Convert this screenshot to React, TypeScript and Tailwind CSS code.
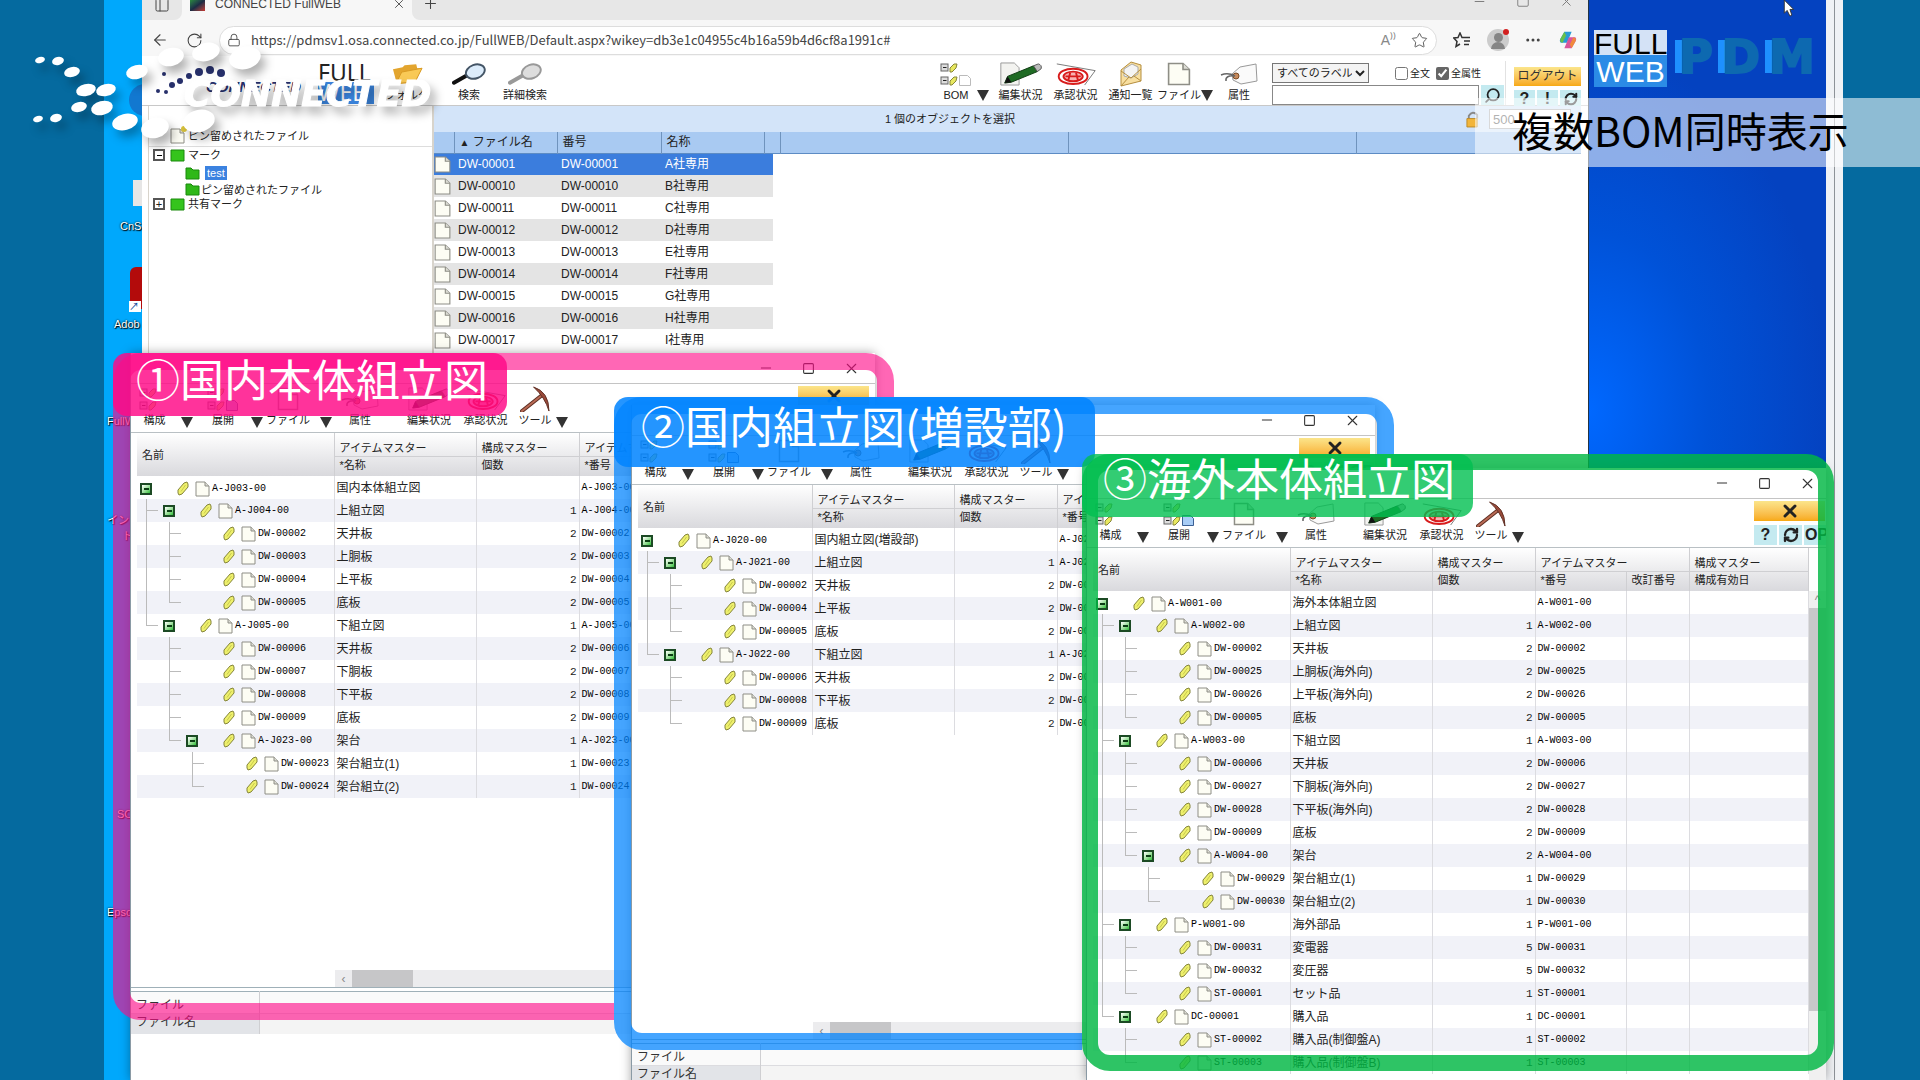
import type { ReactNode } from 'react';
import {
  ArrowLeft,
  Lock,
  Minus,
  MoreHorizontal,
  PanelLeft,
  Plus,
  RefreshCw,
  RotateCw,
  Search,
  Square,
  Star,
  X,
} from 'lucide-react';

type BomRow = { level: number; code: string; name: string; qty?: number };

const files = [
  ['DW-00001', 'A社専用'],
  ['DW-00010', 'B社専用'],
  ['DW-00011', 'C社専用'],
  ['DW-00012', 'D社専用'],
  ['DW-00013', 'E社専用'],
  ['DW-00014', 'F社専用'],
  ['DW-00015', 'G社専用'],
  ['DW-00016', 'H社専用'],
  ['DW-00017', 'I社専用'],
];

const domesticRows: BomRow[] = [
  { level: 0, code: 'A-J003-00', name: '国内本体組立図' },
  { level: 1, code: 'A-J004-00', name: '上組立図', qty: 1 },
  { level: 2, code: 'DW-00002', name: '天井板', qty: 2 },
  { level: 2, code: 'DW-00003', name: '上胴板', qty: 2 },
  { level: 2, code: 'DW-00004', name: '上平板', qty: 2 },
  { level: 2, code: 'DW-00005', name: '底板', qty: 2 },
  { level: 1, code: 'A-J005-00', name: '下組立図', qty: 1 },
  { level: 2, code: 'DW-00006', name: '天井板', qty: 2 },
  { level: 2, code: 'DW-00007', name: '下胴板', qty: 2 },
  { level: 2, code: 'DW-00008', name: '下平板', qty: 2 },
  { level: 2, code: 'DW-00009', name: '底板', qty: 2 },
  { level: 2, code: 'A-J023-00', name: '架台', qty: 1 },
  { level: 3, code: 'DW-00023', name: '架台組立(1)', qty: 1 },
  { level: 3, code: 'DW-00024', name: '架台組立(2)', qty: 1 },
];

const extensionRows: BomRow[] = [
  { level: 0, code: 'A-J020-00', name: '国内組立図(増設部)' },
  { level: 1, code: 'A-J021-00', name: '上組立図', qty: 1 },
  { level: 2, code: 'DW-00002', name: '天井板', qty: 2 },
  { level: 2, code: 'DW-00004', name: '上平板', qty: 2 },
  { level: 2, code: 'DW-00005', name: '底板', qty: 2 },
  { level: 1, code: 'A-J022-00', name: '下組立図', qty: 1 },
  { level: 2, code: 'DW-00006', name: '天井板', qty: 2 },
  { level: 2, code: 'DW-00008', name: '下平板', qty: 2 },
  { level: 2, code: 'DW-00009', name: '底板', qty: 2 },
];

const overseasRows: BomRow[] = [
  { level: 0, code: 'A-W001-00', name: '海外本体組立図' },
  { level: 1, code: 'A-W002-00', name: '上組立図', qty: 1 },
  { level: 2, code: 'DW-00002', name: '天井板', qty: 2 },
  { level: 2, code: 'DW-00025', name: '上胴板(海外向)', qty: 2 },
  { level: 2, code: 'DW-00026', name: '上平板(海外向)', qty: 2 },
  { level: 2, code: 'DW-00005', name: '底板', qty: 2 },
  { level: 1, code: 'A-W003-00', name: '下組立図', qty: 1 },
  { level: 2, code: 'DW-00006', name: '天井板', qty: 2 },
  { level: 2, code: 'DW-00027', name: '下胴板(海外向)', qty: 2 },
  { level: 2, code: 'DW-00028', name: '下平板(海外向)', qty: 2 },
  { level: 2, code: 'DW-00009', name: '底板', qty: 2 },
  { level: 2, code: 'A-W004-00', name: '架台', qty: 2 },
  { level: 3, code: 'DW-00029', name: '架台組立(1)', qty: 1 },
  { level: 3, code: 'DW-00030', name: '架台組立(2)', qty: 1 },
  { level: 1, code: 'P-W001-00', name: '海外部品', qty: 1 },
  { level: 2, code: 'DW-00031', name: '変電器', qty: 5 },
  { level: 2, code: 'DW-00032', name: '変圧器', qty: 5 },
  { level: 2, code: 'ST-00001', name: 'セット品', qty: 1 },
  { level: 1, code: 'DC-00001', name: '購入品', qty: 1 },
  { level: 2, code: 'ST-00002', name: '購入品(制御盤A)', qty: 1 },
  { level: 2, code: 'ST-00003', name: '購入品(制御盤B)', qty: 1 },
];

/* ---------- icons ---------- */

function DocIcon({ className = 'w-[15px] h-[16px]' }: { className?: string }) {
  return (
    <svg viewBox="0 0 15 16" className={`${className} shrink-0`} preserveAspectRatio="none">
      <path d="M1 1h9l4 4v10H1z" fill="#fdfdf4" stroke="#8e8e86" />
      <path d="M10 1v4h4" fill="#dcdcd4" stroke="#8e8e86" />
    </svg>
  );
}

function ClipIcon() {
  return (
    <svg viewBox="0 0 12 15" className="w-[12px] h-[15px] shrink-0">
      <path d="M1 9 7 2l3-1 1 2v3l-6 7-3 1-1-2z" fill="#eef06c" stroke="#85853a" />
      <path d="M4 10.500 8.500 4" stroke="#c9ca4e" fill="none" />
    </svg>
  );
}

function BomIcon({ withPage = false, blue = false }: { withPage?: boolean; blue?: boolean }) {
  return (
    <svg viewBox="0 0 32 24" className="w-[32px] h-[24px]">
      {[2, 15].map((y) => (
        <g key={y}>
          <rect x="1" y={y} width="7" height="7" fill="#ddd" stroke="#666" />
          <path d={`M3 ${y + 3.5}h3.500`} stroke="#222" />
          <path d={`M10 ${y + 4}l4-4h3l-1 4-4 4h-2z`} fill="#e8e860" stroke="#85853a" />
        </g>
      ))}
      {withPage && (
        <path
          d="M19.500 13.500h8l3 3v7h-11z"
          fill={blue ? '#a8cdf6' : '#fff'}
          stroke={blue ? '#3b5f94' : '#bbb'}
        />
      )}
    </svg>
  );
}

function PencilIcon() {
  return (
    <svg viewBox="0 0 46 25" className="w-[46px] h-[24px]">
      <path d="M2 1h14l5 5v18H2z" fill="#f3f3f0" stroke="#999" />
      <path d="M6 22 9 15 36 4l4 6-27 11z" fill="#1f6b24" stroke="#0d3a10" />
      <path d="m36 4 5-2q4 1 3 5l-4 3z" fill="#bbb" stroke="#555" />
      <path d="m6 22 3-7 4 6z" fill="#111" />
    </svg>
  );
}

function StampIcon() {
  return (
    <svg viewBox="0 0 42 25" className="w-[42px] h-[24px]">
      <path d="M1 2 41 9 30 24" fill="none" stroke="#777" />
      <ellipse cx="18" cy="15" rx="15" ry="8" fill="#fff" stroke="#d81c1c" strokeWidth="2" />
      <ellipse cx="18" cy="15" rx="10" ry="5" fill="#f9b3b3" stroke="#d81c1c" strokeWidth="2" />
      <path d="M10 15h16M15 11l-2 8M21 11l2 8" stroke="#d81c1c" strokeWidth="2" />
    </svg>
  );
}

function EnvelopeIcon() {
  return (
    <svg viewBox="0 0 24 26" className="w-[24px] h-[26px]">
      <path d="M2 9 12 1l10 3v16l-20 5z" fill="#f8dfa0" stroke="#b58e3e" />
      <path d="M5 8 13 3l6 3v7l-7 4-7-2z" fill="#f4f4f4" stroke="#aaa" />
      <path d="m2 10 10 7 10-9M2 25l8-9M22 20l-7-5" fill="none" stroke="#b58e3e" />
    </svg>
  );
}

function TagIcon() {
  return (
    <svg viewBox="0 0 38 24" className="w-[38px] h-[24px]">
      <path d="m12 12 8-7 16-3 1 17-16 3-8-4z" fill="#fafafa" stroke="#999" />
      <circle cx="16" cy="14" r="3" fill="#c78a5c" stroke="#7a4a24" />
      <path d="M15 14Q8 10 1 13m5 6q-1-6 9-5" fill="none" stroke="#666" strokeWidth="1.500" />
    </svg>
  );
}

function PickIcon() {
  return (
    <svg viewBox="0 0 32 27" className="w-[31px] h-[26px]">
      <path d="M2 26 22 10" stroke="#5e2e22" strokeWidth="4" strokeLinecap="round" />
      <path d="M2 26 22 10" stroke="#b96a55" strokeWidth="2" strokeLinecap="round" />
      <path d="M14 1q16 5 16 25Q26 12 14 1z" fill="#9a4a3a" stroke="#5e2e22" />
    </svg>
  );
}

function FolderIcon() {
  return (
    <svg viewBox="0 0 32 22" className="w-[31px] h-[22px]">
      <path d="m1 6 10-2 2-2 12-1 1 4 5 0-8 15-18 1z" fill="#e3a52e" />
      <path d="m4 21 6-12 21-4-7 14z" fill="#f9c956" stroke="#d89a24" />
    </svg>
  );
}

function LensIcon({ gray = false }: { gray?: boolean }) {
  return (
    <svg viewBox="0 0 36 22" className="w-[35px] h-[22px]">
      <path d="m2 20 14-8" stroke={gray ? '#999' : '#111'} strokeWidth="4" strokeLinecap="round" />
      <ellipse
        cx="24"
        cy="8.500"
        rx="10"
        ry="7"
        transform="rotate(-20 24 8.500)"
        fill={gray ? '#ddd' : '#dcecfb'}
        stroke={gray ? '#999' : '#456'}
        strokeWidth="2"
      />
    </svg>
  );
}

function GreenBox({ folder = false }: { folder?: boolean }) {
  return (
    <svg viewBox="0 0 15 13" className="w-[15px] h-[13px] shrink-0">
      {folder ? (
        <path d="M1 1h5l2 2h6v9H1z" fill="#2fb818" stroke="#1b8a0c" />
      ) : (
        <path d="M1 1h13v11H1z" fill="#35c41c" stroke="#1b8a0c" />
      )}
    </svg>
  );
}

/* ---------- shared bits ---------- */

function ToolButton({ label, icon, className }: { label: string; icon: ReactNode; className: string }) {
  return (
    <button className={`flex flex-col items-center shrink-0 whitespace-nowrap ${className}`}>
      <span className="flex h-[26px] items-center justify-center">{icon}</span>
      <span className="text-[11px] leading-4">{label}</span>
    </button>
  );
}

function Caret({ className }: { className: string }) {
  return (
    <button aria-label="メニューを開く" className={`flex shrink-0 justify-center self-end pb-[4px] ${className}`}>
      <svg viewBox="0 0 12 11" className="w-[12px] h-[11px]">
        <path d="M0 0h12L6 11z" fill="#333" />
      </svg>
    </button>
  );
}

// true when the vertical guide of this level goes on below the row
function guideContinues(rows: BomRow[], index: number, level: number) {
  for (let i = index + 1; i < rows.length; i++) {
    if (rows[i].level === level) return true;
    if (rows[i].level < level) return false;
  }
  return false;
}

function TreeCell({ rows, index }: { rows: BomRow[]; index: number }) {
  const row = rows[index];
  const hasChildren = rows[index + 1]?.level > row.level;
  return (
    <div className={`flex h-[22px] items-center pl-[3px] ${row.level === 0 ? 'pt-[2px]' : ''}`}>
      {Array.from({ length: row.level }, (_, k) => {
        const goesOn = guideContinues(rows, index, k + 1);
        const isOwn = k === row.level - 1;
        return (
          <span key={k} className="flex h-[23px] w-[23px] shrink-0 flex-col pl-[6px]">
            <span
              className={`h-[12px] w-[12px] ${goesOn || isOwn ? 'border-l border-[#bbb]' : ''} ${
                isOwn ? 'border-b' : ''
              }`}
            />
            <span className={`h-[11px] ${goesOn ? 'border-l border-[#bbb]' : ''}`} />
          </span>
        );
      })}
      {hasChildren ? (
        <button
          aria-label="折りたたむ"
          className="mr-[25px] flex size-[12px] shrink-0 items-center justify-center border-2 border-[#1c4a24] bg-linear-to-br from-white to-[#1fc034]"
        >
          <span className="h-[2px] w-[5px] bg-[#0c3d14]" />
        </button>
      ) : (
        <span className="mr-[25px] w-[12px] shrink-0" />
      )}
      <ClipIcon />
      <span className="ml-[6px] flex">
        <DocIcon />
      </span>
      <span className="ml-[2px] [font-family:'Liberation_Mono',monospace] text-[10px] text-black">{row.code}</span>
    </div>
  );
}

function BomTable({ rows, narrow }: { rows: BomRow[]; narrow?: boolean }) {
  const th = 'border-r border-[#cfcfd2] p-0 pl-[5px] text-left font-normal';
  const td = 'border-r border-[#dcdce0] p-0 pl-[2px]';
  return (
    <table className="w-full table-fixed border-collapse whitespace-nowrap text-[12px] leading-4">
      <colgroup>
        <col className={narrow ? 'w-[174px]' : 'w-[197px]'} />
        <col className="w-[142px]" />
        <col className="w-[103px]" />
        <col className="w-[91px]" />
        <col className="w-[63px]" />
        <col />
      </colgroup>
      <thead className="bg-linear-to-b from-white to-[#d9d9dd] text-[11px] text-[#222]">
        <tr className="h-[23px] align-bottom">
          <th rowSpan={2} className={`${th} align-middle`}>
            名前
          </th>
          <th className={`${th} border-b`}>アイテムマスター</th>
          <th className={`${th} border-b`}>構成マスター</th>
          <th colSpan={2} className={`${th} border-b`}>
            アイテムマスター
          </th>
          <th className={`${th} border-b`}>構成マスター</th>
        </tr>
        <tr className="h-[20px] align-top">
          <th className={th}>*名称</th>
          <th className={th}>個数</th>
          <th className={th}>*番号</th>
          <th className={th}>改訂番号</th>
          <th className={th}>構成有効日</th>
        </tr>
      </thead>
      <tbody>
        {rows.map((row, i) => (
          <tr key={i} className="h-[23px] even:bg-[#f1f2f8]">
            <td className="overflow-hidden border-r border-[#dcdce0] p-0">
              <TreeCell rows={rows} index={i} />
            </td>
            <td className={td}>{row.name}</td>
            <td className="border-r border-[#dcdce0] p-0 pr-[2px] text-right [font-family:'Liberation_Mono',monospace] text-[11px]">
              {row.qty}
            </td>
            <td className={`${td} [font-family:'Liberation_Mono',monospace] text-[10px] text-black`}>{row.code}</td>
            <td className={td} />
            <td className={td} />
          </tr>
        ))}
      </tbody>
    </table>
  );
}

function BomWindow({ rows, narrow, className }: { rows: BomRow[]; narrow?: boolean; className: string }) {
  const isLong = rows.length > 20;
  return (
    <section
      className={`absolute overflow-hidden border-l border-[#8a9aa5] bg-white shadow-[0_0_10px_rgba(0,0,0,0.35)] ${className}`}
    >
      <div className="flex h-full min-w-[744px] flex-col">
        <div className="flex h-[31px] shrink-0 items-center justify-end gap-[28px] border-b border-[#c4c4c4] pr-[15px] text-[#333]">
          <button aria-label="最小化">
            <Minus size={16} strokeWidth={1.5} />
          </button>
          <button aria-label="最大化">
            <Square size={13} strokeWidth={2} />
          </button>
          <button aria-label="ウィンドウを閉じる">
            <X size={17} strokeWidth={1.5} />
          </button>
        </div>
        <div className="flex h-[49px] shrink-0 border-b border-[#b9c0c4] pt-[2px]">
          <ToolButton label="構成" icon={<BomIcon />} className="w-[47px]" />
          <Caret className="w-[18px]" />
          <ToolButton label="展開" icon={<BomIcon withPage blue />} className="w-[54px]" />
          <Caret className="w-[14px]" />
          <ToolButton label="ファイル" icon={<DocIcon className="w-[22px] h-[24px]" />} className="w-[48px]" />
          <Caret className="w-[28px]" />
          <ToolButton label="属性" icon={<TagIcon />} className="w-[40px]" />
          <ToolButton label="編集状況" icon={<PencilIcon />} className="ml-[21px] w-[56px]" />
          <ToolButton label="承認状況" icon={<StampIcon />} className="w-[57px]" />
          <ToolButton label="ツール" icon={<PickIcon />} className="w-[42px]" />
          <Caret className="w-[12px]" />
          <div className="ml-auto flex w-[77px] flex-col gap-[4px]">
            <button
              aria-label="閉じる"
              className="flex h-[20px] w-[71px] items-center justify-center bg-linear-to-b from-[#fbe58a] to-[#f7a90f]"
            >
              <X size={20} strokeWidth={3.5} />
            </button>
            <div className="flex gap-[2px] text-[16px] leading-5 font-bold">
              <button className="w-[23px] bg-[#c4eaf0]">?</button>
              <button aria-label="更新" className="flex w-[23px] items-center justify-center bg-[#c4eaf0]">
                <RefreshCw size={16} strokeWidth={3.5} />
              </button>
              <button className="w-[25px] bg-[#c4eaf0]">OP</button>
            </div>
          </div>
        </div>
        <div className="flex min-h-0 flex-1">
          <div className={`flex shrink-0 flex-col overflow-hidden pl-[6px] ${isLong ? 'w-[722px]' : 'w-[743px]'}`}>
            <BomTable rows={rows} narrow={narrow} />
            {!isLong && (
              <div className={`mt-auto flex h-[17px] bg-[#ececee] ${narrow ? 'ml-[175px]' : 'ml-[198px]'}`}>
                <button aria-label="左へスクロール" className="w-[17px] text-[12px] leading-4 text-[#888]">
                  ‹
                </button>
                <span className="w-[61px] bg-[#c6c6c8]" />
              </div>
            )}
          </div>
          {isLong && (
            <div className="mt-[43px] flex w-[17px] flex-col bg-[#f0f0f0]">
              <button aria-label="上へスクロール" className="h-[17px] text-[12px] leading-4 text-[#888]">
                ^
              </button>
              <span className="h-[403px] bg-[#c8c8ca]" />
            </div>
          )}
        </div>
        {!isLong && (
          <div className="h-[93px] shrink-0 border-t border-[#9fb0b8] pt-[3px]">
            <table className="w-full border-collapse border-t border-[#9fb0b8] text-[12px] leading-4 text-[#333]">
              <tbody>
                <tr className="h-[22px] bg-[#fafafa]">
                  <th className="w-[128px] border-r border-[#cfcfd2] p-0 pl-[5px] text-left align-bottom font-normal">
                    ファイル
                  </th>
                  <td />
                </tr>
                <tr className="h-[20px] border-t border-[#dcdce0] bg-[#f4f4f4]">
                  <th className="border-r border-[#cfcfd2] bg-[#e2e4e8] p-0 pl-[5px] text-left align-top font-normal">
                    ファイル名
                  </th>
                  <td />
                </tr>
              </tbody>
            </table>
          </div>
        )}
      </div>
    </section>
  );
}

/* ---------- main browser window ---------- */

function BrowserChrome() {
  return (
    <header>
      <div className="flex h-[20px] items-start bg-[#f7f7f7] text-[#444]">
        <button aria-label="タブ操作" className="flex h-[20px] w-[40px] justify-center rounded-br-[8px] bg-[#e7e7e7]">
          <PanelLeft size={16} strokeWidth={1.5} className="-mt-[3px]" />
        </button>
        <div className="flex h-[20px] w-[230px] items-start bg-[#f7f7f7] pl-[8px]">
          <span className="h-[11px] w-[15px] bg-linear-to-br from-[#2a8a3a] via-[#1c2b44] to-[#c8322c]" />
          <span className="-mt-[4px] ml-[10px] text-[12px] leading-4">CONNECTED FullWEB</span>
          <button aria-label="タブを閉じる" className="-mt-[3px] mr-[6px] ml-auto">
            <X size={14} strokeWidth={1.5} />
          </button>
        </div>
        <div className="flex h-[20px] flex-1 items-start rounded-bl-[8px] bg-[#e7e7e7]">
          <button aria-label="新しいタブ" className="-mt-[5px] ml-[10px]">
            <Plus size={17} strokeWidth={1.5} />
          </button>
          <div className="-mt-[6px] ml-auto flex gap-[29px] pr-[14px] text-[#777]">
            <Minus size={15} strokeWidth={1.5} />
            <Square size={14} strokeWidth={1.5} />
            <X size={15} strokeWidth={1.5} />
          </div>
        </div>
      </div>
      <div className="flex h-[36px] items-center bg-[#f7f7f7] pt-[4px] text-[#444]">
        <button aria-label="戻る" className="ml-[9px]">
          <ArrowLeft size={18} strokeWidth={1.5} />
        </button>
        <button aria-label="再読み込み" className="ml-[17px]">
          <RotateCw size={17} strokeWidth={1.5} />
        </button>
        <label className="ml-[16px] flex h-[29px] flex-1 items-center rounded-full border border-[#ddd] bg-white pl-[7px]">
          <Lock size={14} strokeWidth={1.5} />
          <input
            aria-label="アドレス"
            className="ml-[10px] flex-1 [font-family:'Noto_Sans_CJK_JP',sans-serif] text-[13px] leading-5 text-[#444] outline-none"
            defaultValue="https://pdmsv1.osa.connected.co.jp/FullWEB/Default.aspx?wikey=db3e1c04955c4b16a59b4d6cf8a1991c#"
          />
          <span className="mr-[15px] text-[14px] text-[#888]">A⁾⁾</span>
          <Star size={17} strokeWidth={1.2} className="mr-[8px]" />
        </label>
        <svg viewBox="0 0 18 16" className="ml-[16px] h-[16px] w-[18px]" fill="none" stroke="#333" strokeWidth="1.500">
          <path d="M11 5.500H9L7 1 5 5.500.800 6 4 9.500 3 14.500l4-2.500M11 5.500h6M11 9h6M11 12.500h5" />
        </svg>
        <span className="relative ml-[16px] flex size-[22px] flex-col items-center justify-end overflow-visible rounded-full bg-[#ccc]">
          <span className="size-[9px] rounded-full bg-[#858585]" />
          <span className="mb-[2px] h-[7px] w-[14px] rounded-t-full bg-[#858585]" />
          <span className="absolute top-0 right-0 size-[6px] rounded-full bg-[#d21f1f]" />
        </span>
        <MoreHorizontal size={18} className="ml-[15px]" />
        <svg viewBox="0 0 22 22" className="mr-[10px] ml-[16px] h-[20px] w-[20px]">
          <path d="M7 2h8l-5 12H3q-2-2 0-5z" fill="#2a9ad6" />
          <path d="M7 2 3 9q-2 4 2 5l4-8z" fill="#67c04a" />
          <path d="M15 20H7l5-12h7q2 2 0 5z" fill="#d9559b" />
          <path d="m15 20 4-7q2-4-2-5l-4 8z" fill="#f08a3c" />
        </svg>
      </div>
    </header>
  );
}

function AppToolbar() {
  return (
    <div className="flex h-[50px] border-b border-[#c8c8c8] pt-[5px] pl-[6px]">
      <div className="flex w-[170px] shrink-0 items-start">
        <svg viewBox="0 0 164 40" className="h-[40px] w-[164px]" role="img" aria-label="CONNECTED">
          <g fill="#27306b">
            <circle cx="62" cy="9" r="4" />
            <circle cx="51" cy="11" r="4" />
            <circle cx="41" cy="15" r="3" />
            <circle cx="73" cy="12" r="4" />
            <circle cx="32" cy="20" r="3" />
            <circle cx="24" cy="24" r="3" />
            <circle cx="18" cy="31" r="2" />
            <circle cx="10" cy="30" r="2" />
            <circle cx="16" cy="13" r="2" />
          </g>
          <text x="58" y="31" fontSize="15" fontWeight="700" fontStyle="italic" fill="#27306b">
            CONNECTED
          </text>
        </svg>
      </div>
      <div className="w-[56px] shrink-0 [font-family:'Noto_Sans',sans-serif] text-[23px] leading-[20px]">
        <div className="pt-px">FULL</div>
        <div className="h-[22px] bg-[#3b86e0] text-white">WEB</div>
      </div>
      <ToolButton label="フォルダ" icon={<FolderIcon />} className="ml-[8px] w-[50px]" />
      <ToolButton label="検索" icon={<LensIcon />} className="ml-[12px] w-[50px]" />
      <ToolButton label="詳細検索" icon={<LensIcon gray />} className="ml-[6px] w-[50px]" />
      <div className="ml-auto flex">
        <ToolButton label="BOM" icon={<BomIcon withPage />} className="w-[38px]" />
        <Caret className="mr-[2px] w-[16px]" />
        <ToolButton label="編集状況" icon={<PencilIcon />} className="w-[55px]" />
        <ToolButton label="承認状況" icon={<StampIcon />} className="w-[55px]" />
        <ToolButton label="通知一覧" icon={<EnvelopeIcon />} className="w-[55px]" />
        <ToolButton label="ファイル" icon={<DocIcon className="w-[24px] h-[24px]" />} className="w-[42px]" />
        <Caret className="w-[14px]" />
        <ToolButton label="属性" icon={<TagIcon />} className="w-[50px]" />
      </div>
      <div className="ml-[8px] w-[234px] shrink-0 border-r border-[#e2e2e2] pt-[2px]">
        <div className="flex h-[20px] items-center text-[11px]">
          <select aria-label="ラベル" className="h-[20px] w-[97px] border border-[#777] bg-[#f4f4f4] text-[11px]">
            <option>すべてのラベル</option>
          </select>
          <label className="ml-[26px] flex items-center gap-[2px] text-[10px]">
            <input type="checkbox" className="size-[13px]" />
            全文
          </label>
          <label className="ml-[6px] flex items-center gap-[2px] text-[10px]">
            <input type="checkbox" defaultChecked className="size-[13px] accent-[#666]" />
            全属性
          </label>
        </div>
        <div className="mt-[2px] flex h-[20px]">
          <input aria-label="検索語" className="w-[207px] border border-[#888]" />
          <button aria-label="検索" className="ml-[2px] flex w-[23px] items-center justify-center bg-[#c4eaf0]">
            <Search size={17} strokeWidth={2.5} className="-scale-x-100" />
          </button>
        </div>
      </div>
      <div className="mr-[7px] ml-[8px] w-[67px] shrink-0 pt-[2px]">
        <button className="h-[19px] w-full bg-linear-to-b from-[#fbe58a] to-[#f7a90f] text-[12px] leading-[18px] text-[#333]">
          ログアウト
        </button>
        <div className="mt-[3px] flex gap-[2px] text-[16px] leading-[17px] font-bold">
          <button className="flex-1 bg-[#c4eaf0]">?</button>
          <button className="flex-1 bg-[#c4eaf0]">!</button>
          <button aria-label="更新" className="flex flex-1 items-center justify-center bg-[#c4eaf0]">
            <RefreshCw size={14} strokeWidth={3.5} />
          </button>
        </div>
      </div>
    </div>
  );
}

function Sidebar() {
  return (
    <nav className="ml-[6px] w-[286px] shrink-0 border-r-2 border-l border-[#d8d4cc] text-[11px] leading-4">
      <div className="flex h-[41px] items-end border-b border-[#ddd] pb-[2px] pl-[21px]">
        <span className="relative flex">
          <DocIcon />
          <span className="absolute -top-[2px] -right-[2px] size-[6px] rounded-full bg-[#d8c23a]" />
        </span>
        <span className="ml-[3px]">ピン留めされたファイル</span>
      </div>
      <div className="flex h-[16px] items-center pl-[4px]">
        <button aria-label="折りたたむ" className="mr-[5px] flex size-[12px] items-center justify-center border-2 border-[#555]">
          <span className="h-px w-[5px] bg-black" />
        </button>
        <GreenBox />
        <span className="ml-[3px]">マーク</span>
      </div>
      <div className="flex h-[20px] items-center pl-[36px]">
        <GreenBox folder />
        <span className="ml-[5px] bg-[#3b82e0] px-[2px] leading-[14px] text-white">test</span>
      </div>
      <div className="flex h-[13px] items-center pl-[36px]">
        <GreenBox folder />
        <span className="ml-[1px]">ピン留めされたファイル</span>
      </div>
      <div className="flex h-[16px] items-center pl-[4px]">
        <button aria-label="展開" className="mr-[5px] flex size-[12px] items-center justify-center border-2 border-[#555] text-[11px] leading-none">
          +
        </button>
        <GreenBox />
        <span className="ml-[3px]">共有マーク</span>
      </div>
    </nav>
  );
}

function FileList() {
  const th = 'border-r border-[#6f93bd] p-0 pl-[5px] text-left font-normal';
  return (
    <div className="mr-[7px] flex-1">
      <div className="flex h-[26px] items-center bg-[#d3e4f9] text-[11px]">
        <span className="flex-1 text-center">1 個のオブジェクトを選択</span>
        <svg viewBox="0 0 15 18" className="h-[17px] w-[14px]">
          <path d="M3 8V5q4-6 9-1v4" fill="none" stroke="#888" strokeWidth="2" />
          <path d="M1 8h11v9H1z" fill="#f2b53a" stroke="#b98722" />
        </svg>
        <input
          aria-label="表示件数"
          defaultValue="500"
          className="mr-[10px] ml-[9px] h-[20px] w-[82px] border border-[#aaa] bg-white pl-[3px] text-[13px] text-[#555]"
        />
      </div>
      <table className="w-full table-fixed border-collapse text-[12px] leading-4">
        <colgroup>
          <col className="w-[20px]" />
          <col className="w-[103px]" />
          <col className="w-[104px]" />
          <col className="w-[103px]" />
          <col className="w-[9px]" />
          <col className="w-[7px]" />
          <col className="w-[288px]" />
          <col className="w-[288px]" />
          <col />
        </colgroup>
        <thead>
          <tr className="h-[21px] border-b border-[#5d8cc4] bg-[#a9caf2]">
            <th className={th} />
            <th className={th}>
              <span className="text-[10px]">▲</span> ファイル名
            </th>
            <th className={th}>番号</th>
            <th className={th}>名称</th>
            <th colSpan={2} className={th} />
            <th className={th} />
            <th className={th} />
            <th />
          </tr>
        </thead>
        <tbody>
          {files.map(([code, name], i) => {
            const bg = i === 0 ? 'bg-[#3b7ddd] text-white' : i % 2 ? 'bg-[#e4e4e4]' : 'bg-white';
            return (
              <tr key={code} className="h-[22px]">
                <td className={`${bg} p-0`}>
                  <DocIcon className="w-[17px] h-[17px]" />
                </td>
                <td className={`${bg} p-0 pl-[4px]`}>{code}</td>
                <td className={`${bg} p-0 pl-[4px]`}>{code}</td>
                <td className={`${bg} p-0 pl-[4px]`}>{name}</td>
                <td className={bg} />
              </tr>
            );
          })}
        </tbody>
      </table>
    </div>
  );
}

/* ---------- overlays ---------- */

function SwooshLogo() {
  const dots = [
    [40, 60, 5, 3],
    [58, 61, 6, 4],
    [72, 72, 8, 5],
    [86, 90, 10, 6],
    [106, 90, 10, 6],
    [79, 107, 8, 5],
    [102, 108, 11, 7],
    [38, 119, 5, 3],
    [56, 118, 6, 4],
    [125, 122, 13, 8],
    [137, 72, 11, 7],
    [171, 57, 13, 9],
    [206, 52, 14, 9],
    [245, 58, 16, 11],
    [155, 128, 14, 10],
    [199, 121, 16, 11],
  ];
  return (
    <svg
      viewBox="0 0 540 150"
      className="absolute top-0 left-0 h-[150px] w-[540px] drop-shadow-[5px_7px_5px_rgba(0,0,0,0.3)]"
      role="img"
      aria-label="CONNECTED"
    >
      {dots.map(([x, y, rx, ry]) => (
        <ellipse key={`${x}-${y}`} cx={x} cy={y} rx={rx} ry={ry} transform={`rotate(-14 ${x} ${y})`} fill="#fff" />
      ))}
      <text
        x="184"
        y="106"
        fontFamily="DejaVu Sans"
        fontSize="36"
        fontWeight="700"
        fontStyle="italic"
        fill="#fff"
        stroke="#fff"
      >
        CONNECTED
      </text>
    </svg>
  );
}

function ProductLogo() {
  return (
    <div className="absolute top-[30px] left-[1594px] flex">
      <div className="w-[73px] text-[30px]">
        <div className="h-[25px] bg-[#d4e2f6] leading-[28px] text-black">FULL</div>
        <div className="h-[32px] bg-[#2b8be6] text-center leading-[33px] text-white">WEB</div>
      </div>
      <div className="mt-[10px] ml-[8px] flex h-[33px] gap-[5px] [font-family:'DejaVu_Sans',sans-serif] text-[46px] leading-[34px] font-bold text-[#0d69b0]">
        {['P', 'D', 'M'].map((letter) => (
          <span key={letter} className="flex">
            <span className="w-[7px] bg-[#1e90ff]" />
            <span className="-ml-[3px] [-webkit-text-stroke:2px_#0d69b0]">{letter}</span>
          </span>
        ))}
      </div>
    </div>
  );
}

function DesktopIcons() {
  const text = 'text-[11px] leading-4 text-white [text-shadow:1px_1px_1px_#000,0_0_2px_#000] whitespace-nowrap';
  return (
    <div className="relative w-[38px] shrink-0 overflow-hidden">
      <span className="absolute top-[84px] left-[25px] size-[32px] rounded-full bg-[#1278d0]" />
      <span className="absolute top-[180px] left-[29px] h-[26px] w-[20px] bg-[#e6e6e6]" />
      <span className={`absolute top-[218px] left-[16px] ${text}`}>CnS</span>
      <span className="absolute top-[267px] left-[26px] h-[42px] w-[30px] rounded-[6px] bg-[#b30b0b]" />
      <span className="absolute top-[301px] left-[25px] h-[11px] w-[12px] bg-white text-[10px] leading-[11px] text-[#124a9c]">
        ↗
      </span>
      <span className={`absolute top-[316px] left-[10px] ${text}`}>Adob</span>
      <span className={`absolute top-[413px] left-[3px] ${text}`}>FullW</span>
      <span className={`absolute top-[512px] left-[3px] ${text}`}>インス</span>
      <span className={`absolute top-[528px] left-[18px] ${text}`}>ト</span>
      <span className={`absolute top-[806px] left-[13px] ${text}`}>SC</span>
      <span className={`absolute top-[904px] left-[3px] ${text}`}>Epso</span>
    </div>
  );
}

export default function App() {
  return (
    <main className="relative h-screen overflow-hidden bg-[#056a9f] [font-family:'Liberation_Sans','Noto_Sans_CJK_JP',sans-serif] text-[#222]">
      <div className="flex h-full pr-[77px] pl-[104px]">
        <div className="flex min-w-0 flex-1 bg-[#00a8fc]">
          <DesktopIcons />
          <div className="flex min-w-0 flex-1 flex-col bg-white">
            <BrowserChrome />
            <AppToolbar />
            <div className="flex flex-1">
              <Sidebar />
              <FileList />
            </div>
          </div>
          <div className="w-[238px] shrink-0 border-l border-[#234] bg-[radial-gradient(ellipse_240px_360px_at_0%_38%,#0068ff_0%,#0052d8_50%,#0442c0_100%)]" />
        </div>
        <div className="w-[17px] shrink-0 border-r-8 border-l-8 border-[#f0f2f5] bg-[#8d9297]" />
      </div>

      <BomWindow rows={domesticRows} className="top-[353px] bottom-0 left-[130px] w-[745px]" />
      <div className="pointer-events-none absolute top-[353px] left-[113px] h-[667px] w-[781px] rounded-[28px] border-17 border-[#ff0a87]/62 [clip-path:polygon(0_0,100%_0,100%_44px,501px_44px,501px_100%,0_100%)]" />
      <h2 className="absolute top-[353px] left-[113px] h-[63px] rounded-[14px] bg-[#ff0a87]/83 pr-[19px] pl-[23px] [font-family:'Noto_Sans_CJK_JP',sans-serif] text-[44px] leading-[50px] whitespace-nowrap text-white">
        ①国内本体組立図
      </h2>

      <BomWindow rows={extensionRows} narrow className="top-[405px] -bottom-[52px] left-[631px] w-[744px]" />
      <div className="pointer-events-none absolute top-[397px] left-[614px] h-[653px] w-[780px] rounded-[28px] border-17 border-[#0084ff]/73 [clip-path:polygon(0_0,100%_0,100%_57px,468px_57px,468px_100%,0_100%)]" />
      <h2 className="absolute top-[397px] left-[614px] h-[70px] rounded-[14px] bg-[#0084ff]/86 pr-[28px] pl-[27px] [font-family:'Noto_Sans_CJK_JP',sans-serif] text-[44px] leading-[56px] whitespace-nowrap text-white">
        ②国内組立図(増設部)
      </h2>

      <BomWindow rows={overseasRows} className="top-[468px] bottom-0 left-[1086px] w-[740px]" />
      <div className="pointer-events-none absolute top-[454px] left-[1082px] h-[617px] w-[752px] rounded-[28px] border-16 border-[#00b743]/82" />
      <h2 className="absolute top-[454px] left-[1082px] h-[63px] rounded-[14px] bg-[#00bf50]/80 pr-[18px] pl-[21px] [font-family:'Noto_Sans_CJK_JP',sans-serif] text-[44px] leading-[46px] whitespace-nowrap text-white">
        ③海外本体組立図
      </h2>

      <SwooshLogo />
      <ProductLogo />
      <h1 className="absolute top-[98px] right-0 left-[1475px] h-[69px] bg-white/55 pl-[37px] [font-family:'Noto_Sans_CJK_JP',sans-serif] text-[41px] leading-[62px] whitespace-nowrap text-black">
        複数BOM同時表示
      </h1>
      <svg viewBox="0 0 12 18" className="absolute top-0 left-[1783px] h-[17px] w-[12px]">
        <path d="M1 0v14l3-3 3 6 2-1-2-6h4z" fill="#fff" stroke="#333" />
      </svg>
    </main>
  );
}
